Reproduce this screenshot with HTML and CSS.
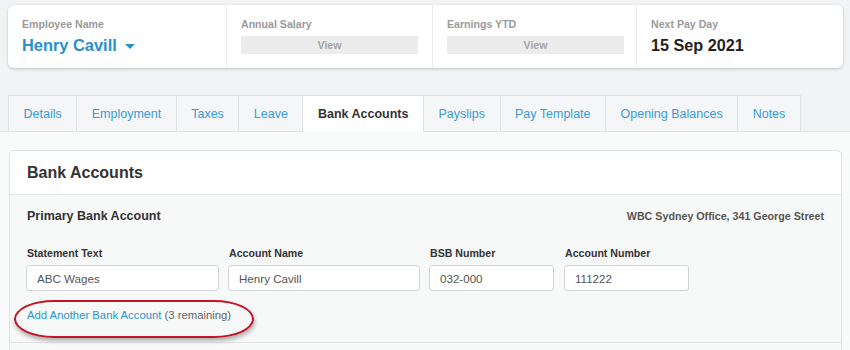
FILE: index.html
```html
<!DOCTYPE html>
<html lang="en">
<head>
    <meta charset="UTF-8">
    <title>Employee - Bank Accounts</title>
    <link rel="stylesheet" href="styles.css">
</head>
<body>
    <section class="summary">
        <div class="summary-item item-name">
            <div class="summary-label">Employee Name</div>
            <div class="employee-name">Henry Cavill <span class="caret"></span></div>
        </div>
        <div class="summary-item item-salary">
            <div class="summary-label">Annual Salary</div>
            <div class="view-bar">View</div>
        </div>
        <div class="summary-item item-ytd">
            <div class="summary-label">Earnings YTD</div>
            <div class="view-bar">View</div>
        </div>
        <div class="summary-item item-payday">
            <div class="summary-label">Next Pay Day</div>
            <div class="pay-day">15 Sep 2021</div>
        </div>
    </section>

    <nav class="tabs">
        <a class="tab">Details</a>
        <a class="tab">Employment</a>
        <a class="tab">Taxes</a>
        <a class="tab">Leave</a>
        <a class="tab active">Bank Accounts</a>
        <a class="tab">Payslips</a>
        <a class="tab">Pay Template</a>
        <a class="tab">Opening Balances</a>
        <a class="tab">Notes</a>
    </nav>

    <main class="content">
        <div class="card">
            <div class="card-header">Bank Accounts</div>
            <div class="card-body">
                <div class="account-head">
                    <h3>Primary Bank Account</h3>
                    <span class="bank-branch">WBC Sydney Office, 341 George Street</span>
                </div>
                <div class="fields">
                    <div class="field field-statement">
                        <label for="statement">Statement Text</label>
                        <input type="text" id="statement" value="ABC Wages">
                    </div>
                    <div class="field field-name">
                        <label for="acc-name">Account Name</label>
                        <input type="text" id="acc-name" value="Henry Cavill">
                    </div>
                    <div class="field field-bsb">
                        <label for="bsb">BSB Number</label>
                        <input type="text" id="bsb" value="032-000">
                    </div>
                    <div class="field field-number">
                        <label for="acc-number">Account Number</label>
                        <input type="text" id="acc-number" value="111222">
                    </div>
                </div>
                <div class="add-row">
                    <a class="add-link">Add Another Bank Account</a>
                    <span class="remaining">(3 remaining)</span>
                    <span class="highlight"></span>
                </div>
            </div>
            <div class="card-next"></div>
        </div>
    </main>
</body>
</html>
```

FILE: styles.css
```css
* {
    margin: 0;
    padding: 0;
    box-sizing: border-box;
}

body {
    font-family: "Liberation Sans", Arial, sans-serif;
    background-color: #f2f3f5;
    color: #333;
    overflow: hidden;
}

/* summary strip */
.summary {
    display: flex;
    margin: 5px 7px 0 8px;
    height: 63px;
    background-color: #fff;
    border-radius: 6px;
    box-shadow: 0 1px 3px rgba(0, 0, 0, 0.22);
}

.summary-item {
    padding: 12px 14px 0 14px;
    border-right: 1px solid #ececec;
}

.item-name { width: 219px; }
.item-salary { width: 206px; }
.item-ytd { width: 204px; }
.item-payday { flex: 1; border-right: none; }

.summary-label {
    font-size: 10.6px;
    font-weight: bold;
    line-height: 14px;
    color: #9a9a9a;
}

.employee-name {
    margin-top: 4px;
    font-size: 16.4px;
    font-weight: bold;
    line-height: 20px;
    color: #2a8fcc;
}

.caret {
    display: inline-block;
    margin-left: 4px;
    vertical-align: middle;
    border-left: 5px solid transparent;
    border-right: 5px solid transparent;
    border-top: 5px solid #2a8fcc;
}

.view-bar {
    margin-top: 5px;
    width: 177px;
    height: 18px;
    line-height: 18px;
    background-color: #ececec;
    text-align: center;
    font-size: 10.6px;
    font-weight: bold;
    color: #a5a5a5;
}

.pay-day {
    margin-top: 4px;
    font-size: 16.2px;
    font-weight: bold;
    line-height: 20px;
    color: #222;
}

/* tabs */
.tabs {
    display: flex;
    margin-top: 27px;
    padding-left: 8px;
    border-bottom: 1px solid #e2e4e6;
}

.tab {
    height: 37px;
    line-height: 36px;
    padding: 0 14.5px;
    margin-bottom: -1px;
    font-size: 12.5px;
    color: #3a9ad6;
    background-color: #f5f6f7;
    border: 1px solid #dfe1e3;
    border-left: none;
}

.tab:first-child {
    border-left: 1px solid #dfe1e3;
}

.tab.active {
    background-color: #fff;
    color: #333;
    font-weight: bold;
    border-bottom-color: #fff;
}

/* content */
.content {
    background-color: #f9fafa;
    padding: 18px 8px 0 9px;
    height: 300px;
}

.card {
    background-color: #f7f8f8;
    border: 1px solid #e2e3e4;
    border-radius: 5px;
}

.card-header {
    height: 44px;
    line-height: 43px;
    padding-left: 17px;
    background-color: #fff;
    border-bottom: 1px solid #e6e7e8;
    border-radius: 5px 5px 0 0;
    font-size: 16px;
    font-weight: bold;
    color: #333;
}

.card-body {
    position: relative;
    padding: 13px 17px 0 16px;
    height: 148px;
    border-bottom: 1px solid #e3e4e5;
}

.account-head {
    display: flex;
    justify-content: space-between;
    align-items: center;
    height: 16px;
    padding-left: 1px;
}

.account-head h3 {
    font-size: 12.5px;
    font-weight: bold;
    color: #333;
}

.bank-branch {
    font-size: 10.7px;
    font-weight: bold;
    color: #555;
}

.fields {
    display: flex;
    gap: 9px;
    margin-top: 22px;
}

.field label {
    display: block;
    padding-left: 1px;
    font-size: 10.6px;
    font-weight: bold;
    line-height: 14px;
    color: #333;
    margin-bottom: 5px;
}

.field input {
    height: 26px;
    padding: 0 10px;
    border: 1px solid #d2d4d6;
    border-radius: 3px;
    background-color: #fff;
    font-family: "Liberation Sans", Arial, sans-serif;
    font-size: 11.6px;
    color: #555;
    outline: none;
}

.field-statement input { width: 193px; }
.field-name input { width: 192px; }
.field-bsb input { width: 125px; }
.field-number { margin-left: 1px; }
.field-number input { width: 125px; }

.add-row {
    margin-top: 18px;
    padding-left: 1px;
    font-size: 11.3px;
}

.add-link {
    color: #2b95d0;
}

.remaining {
    color: #666;
}

/* annotation ring */
.highlight {
    position: absolute;
    left: 4px;
    top: 105px;
    width: 240px;
    height: 38px;
    border: 2px solid #c01526;
    border-radius: 40px / 19px;
    box-shadow: 1px 3px 4px rgba(0, 0, 0, 0.3);
}

.card-next {
    height: 20px;
}
```
